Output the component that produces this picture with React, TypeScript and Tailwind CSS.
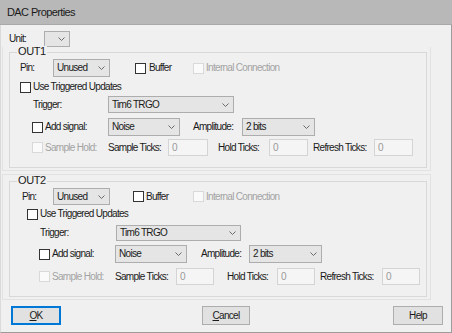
import React from 'react'

// Win10-style "DAC Properties" dialog

function Chevron() {
  return (
    <svg width="7" height="4" viewBox="0 0 7 4" className="shrink-0">
      <path d="M0.5 0.5L3.5 3.5L6.5 0.5" fill="none" stroke="#6b6b6b" strokeWidth="1" />
    </svg>
  )
}

function Select({ value, size }: { value?: string; size: string }) {
  return (
    <div
      className={`flex items-center justify-between shrink-0 border border-[#adadad] bg-[#e5e5e5] pl-[3px] pr-[4px] ${size}`}
    >
      <span>{value}</span>
      <Chevron />
    </div>
  )
}

function Check({ disabled }: { disabled?: boolean }) {
  return (
    <div
      className={`w-[11px] h-[11px] shrink-0 border ${
        disabled ? 'border-[#d9d9d9] bg-[#fafafa]' : 'border-[#333333] bg-white'
      }`}
    />
  )
}

function Field({ size }: { size: string }) {
  return (
    <div className={`flex items-center shrink-0 border border-[#d4d4d4] bg-[#f5f5f5] pl-[3px] text-[#9a9a9a] ${size}`}>
      0
    </div>
  )
}

function GroupLabel({ text }: { text: string }) {
  return (
    <span className="absolute left-[7px] top-[-7px] bg-[#f0f0f0] px-[1px] text-[11px] tracking-[-0.4px] leading-none">
      {text}
    </span>
  )
}

export default function App() {
  return (
    <div className="w-[452px] h-[333px] flex flex-col bg-[#f0f0f0] text-[10px] leading-none tracking-[-0.7px] text-[#1a1a1a] font-['Liberation_Sans',Arial,sans-serif] overflow-hidden">
      {/* Title bar */}
      <div className="h-[25px] shrink-0 flex items-center pl-[7px] bg-[#b8b8b8] border-b border-[#a8a8a8] text-[11px] tracking-[-0.6px] text-[#1a1a1a]">
        DAC Properties
      </div>

      <div className="flex-1 flex flex-col border-l border-r border-b border-l-[#dadada] border-r-[#9c9c9c] border-b-[#9c9c9c]">
        {/* Unit */}
        <div className="flex items-center h-[16px] mt-[6px] pl-[8px]">
          <span className="w-[35px] shrink-0">Unit:</span>
          <Select size="w-[26px] h-[16px]" />
        </div>

        {/* OUT1 */}
        <div className="ml-[1px] w-[429px] border-l border-r border-b border-[#e2e2e2] pt-[5px] pb-[2px]">
          <div className="relative ml-[6px] w-[418px] border border-[#d8d8d8] pl-[10px] pt-[6px] pb-[11px]">
            <GroupLabel text="OUT1" />

            <div className="flex items-center h-[18px]">
              <span className="w-[33px] shrink-0">Pin:</span>
              <Select value="Unused" size="w-[57px] h-[18px]" />
              <div className="ml-[25px]">
                <Check />
              </div>
              <span className="ml-[3px] w-[44px] shrink-0">Buffer</span>
              <Check disabled />
              <span className="ml-[2px] text-[#a3a3a3]">Internal Connection</span>
            </div>

            <div className="flex items-center h-[16px] mt-[2px]">
              <Check />
              <span className="ml-[2px]">Use Triggered Updates</span>
            </div>

            <div className="flex items-center h-[17px] mt-[1px] pl-[13px]">
              <span className="w-[75px] shrink-0">Trigger:</span>
              <Select value="Tim6 TRGO" size="w-[126px] h-[17px]" />
            </div>

            <div className="flex items-center h-[18px] mt-[5px] pl-[12px]">
              <Check />
              <span className="ml-[2px] w-[63px] shrink-0">Add signal:</span>
              <Select value="Noise" size="w-[72px] h-[18px]" />
              <span className="ml-[13px] w-[49px] shrink-0">Amplitude:</span>
              <Select value="2 bits" size="w-[73px] h-[18px]" />
            </div>

            <div className="flex items-center h-[17px] mt-[3px] pl-[12px]">
              <Check disabled />
              <span className="ml-[2px] w-[63px] shrink-0 text-[#a3a3a3]">Sample Hold:</span>
              <span className="w-[60px] shrink-0">Sample Ticks:</span>
              <Field size="w-[40px] h-[17px]" />
              <span className="ml-[10px] w-[51px] shrink-0">Hold Ticks:</span>
              <Field size="w-[39px] h-[17px]" />
              <span className="ml-[5px] w-[61px] shrink-0">Refresh Ticks:</span>
              <Field size="w-[39px] h-[17px]" />
            </div>
          </div>
        </div>

        {/* OUT2 */}
        <div className="ml-[1px] mt-[3px] w-[429px] border border-[#e2e2e2] pt-[6px] pb-[2px]">
          <div className="relative ml-[6px] w-[418px] border border-[#d8d8d8] pl-[10px] pt-[6px] pb-[11px]">
            <GroupLabel text="OUT2" />

            <div className="flex items-center h-[17px] pl-[2px]">
              <span className="w-[31px] shrink-0">Pin:</span>
              <Select value="Unused" size="w-[57px] h-[17px]" />
              <div className="ml-[23px]">
                <Check />
              </div>
              <span className="ml-[2px] w-[47px] shrink-0">Buffer</span>
              <Check disabled />
              <span className="ml-[2px] text-[#a3a3a3]">Internal Connection</span>
            </div>

            <div className="flex items-center h-[16px] mt-[1px] pl-[7px]">
              <Check />
              <span className="ml-[2px]">Use Triggered Updates</span>
            </div>

            <div className="flex items-center h-[16px] mt-[3px] pl-[20px]">
              <span className="w-[76px] shrink-0">Trigger:</span>
              <Select value="Tim6 TRGO" size="w-[125px] h-[16px]" />
            </div>

            <div className="flex items-center h-[18px] mt-[4px] pl-[19px]">
              <Check />
              <span className="ml-[2px] w-[63px] shrink-0">Add signal:</span>
              <Select value="Noise" size="w-[72px] h-[18px]" />
              <span className="ml-[14px] w-[48px] shrink-0">Amplitude:</span>
              <Select value="2 bits" size="w-[73px] h-[18px]" />
            </div>

            <div className="flex items-center h-[17px] mt-[5px] pl-[19px]">
              <Check disabled />
              <span className="ml-[2px] w-[63px] shrink-0 text-[#a3a3a3]">Sample Hold:</span>
              <span className="w-[61px] shrink-0">Sample Ticks:</span>
              <Field size="w-[38px] h-[17px]" />
              <span className="ml-[13px] w-[50px] shrink-0">Hold Ticks:</span>
              <Field size="w-[38px] h-[17px]" />
              <span className="ml-[5px] w-[62px] shrink-0">Refresh Ticks:</span>
              <Field size="w-[38px] h-[17px]" />
            </div>
          </div>
        </div>

        {/* Buttons */}
        <div className="flex items-center mt-[6px] pl-[10px]">
          <button className="w-[50px] h-[19px] flex items-center justify-center border border-[#0078d7] bg-[#e1e1e1] outline outline-1 outline-offset-[-2px] outline-[#0078d7]">
            <span><span className="underline">O</span>K</span>
          </button>
          <button className="ml-[141px] w-[48px] h-[19px] flex items-center justify-center border border-[#adadad] bg-[#e1e1e1]">
            <span><span className="underline">C</span>ancel</span>
          </button>
          <button className="ml-[143px] w-[50px] h-[19px] flex items-center justify-center border border-[#adadad] bg-[#e1e1e1]">
            Help
          </button>
        </div>
      </div>
    </div>
  )
}
